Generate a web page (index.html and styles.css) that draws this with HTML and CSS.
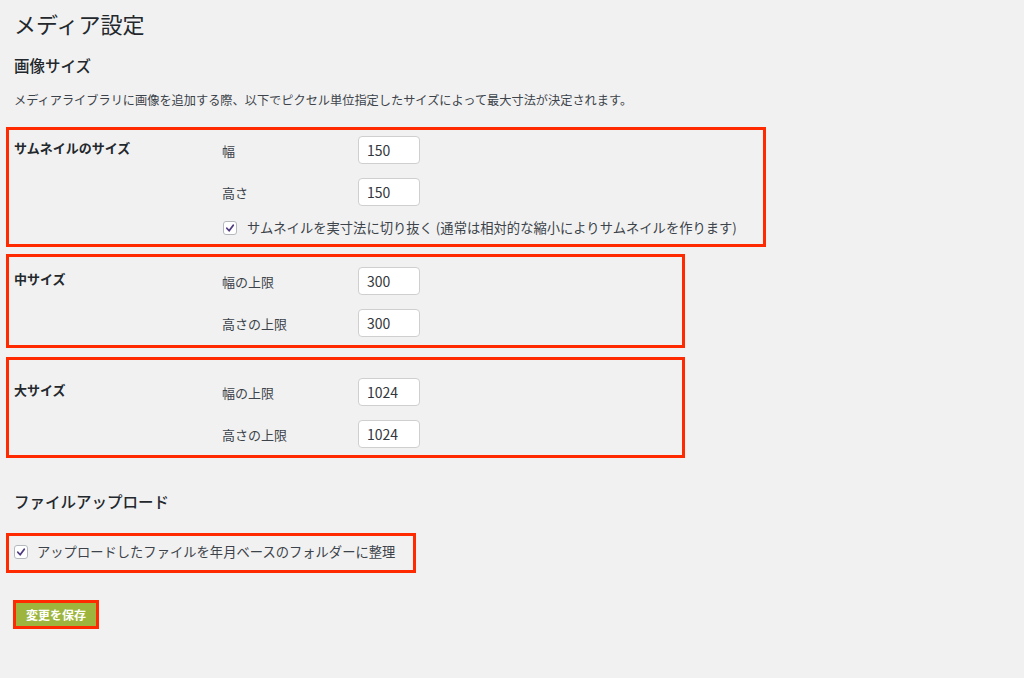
FILE: index.html
```html
<!DOCTYPE html>
<html lang="ja">
<head>
    <meta charset="UTF-8">
    <title>メディア設定</title>
    <link rel="stylesheet" href="styles.css">
</head>
<body>
<div class="wrap">
    <h1>メディア設定</h1>

    <h2 class="title">画像サイズ</h2>
    <p class="desc">メディアライブラリに画像を追加する際、以下でピクセル単位指定したサイズによって最大寸法が決定されます。</p>

    <!-- サムネイル -->
    <div class="mark size-box box-thumb">
        <div class="size-name">サムネイルのサイズ</div>
        <div class="size-fields">
            <div class="field">
                <label for="thumbnail_size_w">幅</label>
                <input type="number" id="thumbnail_size_w" value="150">
            </div>
            <div class="field">
                <label for="thumbnail_size_h">高さ</label>
                <input type="number" id="thumbnail_size_h" value="150">
            </div>
            <label class="check check-crop">
                <span class="tick"><svg viewBox="0 0 14 14" width="14" height="14"><path d="M3.3 7.3 L6 10.2 L10.8 3.7" fill="none" stroke="#4f3a7f" stroke-width="2.1" stroke-linecap="round" stroke-linejoin="round"/></svg></span>
                サムネイルを実寸法に切り抜く (通常は相対的な縮小によりサムネイルを作ります)
            </label>
        </div>
    </div>

    <!-- 中サイズ -->
    <div class="mark size-box box-medium">
        <div class="size-name">中サイズ</div>
        <div class="size-fields">
            <div class="field">
                <label for="medium_size_w">幅の上限</label>
                <input type="number" id="medium_size_w" value="300">
            </div>
            <div class="field">
                <label for="medium_size_h">高さの上限</label>
                <input type="number" id="medium_size_h" value="300">
            </div>
        </div>
    </div>

    <!-- 大サイズ -->
    <div class="mark size-box box-large">
        <div class="size-name">大サイズ</div>
        <div class="size-fields">
            <div class="field">
                <label for="large_size_w">幅の上限</label>
                <input type="number" id="large_size_w" value="1024">
            </div>
            <div class="field">
                <label for="large_size_h">高さの上限</label>
                <input type="number" id="large_size_h" value="1024">
            </div>
        </div>
    </div>

    <h2 class="title title-upload">ファイルアップロード</h2>

    <div class="mark box-upload">
        <label class="check">
            <span class="tick"><svg viewBox="0 0 14 14" width="14" height="14"><path d="M3.3 7.3 L6 10.2 L10.8 3.7" fill="none" stroke="#4f3a7f" stroke-width="2.1" stroke-linecap="round" stroke-linejoin="round"/></svg></span>
            アップロードしたファイルを年月ベースのフォルダーに整理
        </label>
    </div>

    <div class="mark box-submit">
        <button type="submit" class="button-primary">変更を保存</button>
    </div>
</div>
</body>
</html>
```

FILE: styles.css
```css
body {
    margin: 0;
    background-color: #f1f1f1;
    font-family: "Noto Sans CJK JP", "Noto Sans", sans-serif;
    color: #3c434a;
}

.wrap {
    padding: 0 6px;
}

h1 {
    margin: 0;
    padding: 9px 0 0 8px;
    font-size: 22px;
    line-height: 28px;
    font-weight: 400;
    color: #23282d;
}

.title {
    margin: 17px 0 0;
    padding-left: 8px;
    font-size: 15.5px;
    line-height: 22px;
    font-weight: 500;
    color: #23282d;
}

.desc {
    margin: 15px 0 0;
    padding-left: 8px;
    font-size: 12.2px;
    line-height: 18px;
}

/* 赤枠 */
.mark {
    border: 3px solid #ff2a00;
}

.size-box {
    display: grid;
    grid-template-columns: 213px 1fr;
    width: 754px;
}
.box-thumb {
    margin-top: 18px;
    padding: 6px 0;
}
.box-medium {
    width: 673px;
    margin-top: 7px;
    padding: 10px 0 8px;
}
.box-large {
    width: 673px;
    margin-top: 9px;
    padding: 18px 0 7px;
}

.size-name {
    padding-left: 5px;
    font-size: 13px;
    line-height: 24px;
    font-weight: 600;
    color: #23282d;
}

.size-fields {
    display: flex;
    flex-direction: column;
    gap: 14px;
}

.field {
    display: flex;
    align-items: center;
    height: 28px;
}
.field label {
    width: 136px;
    font-size: 13px;
    color: #3c434a;
}
.field input {
    width: 62px;
    height: 28px;
    box-sizing: border-box;
    padding: 0 8px;
    border: 1px solid #cfcfcf;
    border-radius: 4px;
    background: #fff;
    font-family: inherit;
    font-size: 14px;
    color: #32373c;
    -moz-appearance: textfield;
}
.field input::-webkit-outer-spin-button,
.field input::-webkit-inner-spin-button {
    -webkit-appearance: none;
    margin: 0;
}

.check {
    display: flex;
    align-items: center;
    gap: 10px;
    font-size: 13.3px;
    line-height: 20px;
}
.check-crop {
    margin-top: -2px;
    padding-left: 1px;
}

.tick {
    display: flex;
    align-items: center;
    justify-content: center;
    width: 14px;
    height: 14px;
    box-sizing: border-box;
    border: 1px solid #b4b9be;
    border-radius: 3px;
    background: #fff;
}

.title-upload {
    margin-top: 32px;
}

.box-upload {
    margin-top: 21px;
    padding: 6px 0 8px 5px;
    box-sizing: border-box;
    width: 410px;
}
.box-upload .check {
    gap: 9px;
}

.box-submit {
    display: inline-block;
    margin: 27px 0 0 7px;
    line-height: 0;
}

.button-primary {
    width: 80px;
    height: 23px;
    padding: 0;
    border: none;
    background-color: #9db53c;
    color: #fff;
    font-family: inherit;
    font-size: 12px;
    font-weight: 600;
    line-height: 23px;
}
```
